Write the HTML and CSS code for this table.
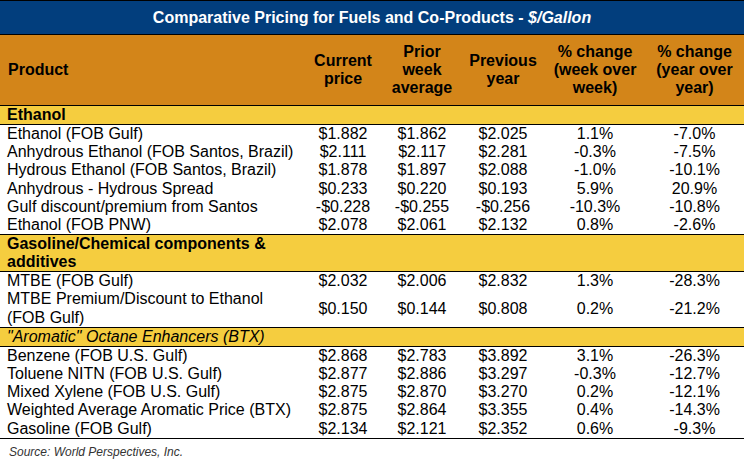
FILE: index.html
```html
<!DOCTYPE html>
<html>
<head>
<meta charset="utf-8">
<link rel="stylesheet" href="styles.css">
</head>
<body>
<div class="sheet">
<table class="grid">
<colgroup>
<col class="c-prod"><col class="c-cur"><col class="c-prior"><col class="c-prev"><col class="c-wk"><col class="c-yr">
</colgroup>
<thead>
<tr class="title-row"><th colspan="6">Comparative Pricing for Fuels and Co-Products - <em>$/Gallon</em></th></tr>
<tr class="head-row">
<th class="left">Product</th>
<th>Current<br>price</th>
<th>Prior<br>week<br>average</th>
<th>Previous<br>year</th>
<th>% change<br>(week over<br>week)</th>
<th>% change<br>(year over<br>year)</th>
</tr>
</thead>
<tbody>
<tr class="sect"><td class="name">Ethanol</td><td></td><td></td><td></td><td></td><td></td></tr>
<tr><td class="name">Ethanol (FOB Gulf)</td><td>$1.882</td><td>$1.862</td><td>$2.025</td><td>1.1%</td><td>-7.0%</td></tr>
<tr><td class="name">Anhydrous Ethanol (FOB Santos, Brazil)</td><td>$2.111</td><td>$2.117</td><td>$2.281</td><td>-0.3%</td><td>-7.5%</td></tr>
<tr><td class="name">Hydrous Ethanol (FOB Santos, Brazil)</td><td>$1.878</td><td>$1.897</td><td>$2.088</td><td>-1.0%</td><td>-10.1%</td></tr>
<tr><td class="name">Anhydrous - Hydrous Spread</td><td>$0.233</td><td>$0.220</td><td>$0.193</td><td>5.9%</td><td>20.9%</td></tr>
<tr><td class="name">Gulf discount/premium from Santos</td><td>-$0.228</td><td>-$0.255</td><td>-$0.256</td><td>-10.3%</td><td>-10.8%</td></tr>
<tr class="last"><td class="name">Ethanol (FOB PNW)</td><td>$2.078</td><td>$2.061</td><td>$2.132</td><td>0.8%</td><td>-2.6%</td></tr>
<tr class="sect tall"><td class="name">Gasoline/Chemical components &amp; additives</td><td></td><td></td><td></td><td></td><td></td></tr>
<tr><td class="name">MTBE (FOB Gulf)</td><td>$2.032</td><td>$2.006</td><td>$2.832</td><td>1.3%</td><td>-28.3%</td></tr>
<tr class="last"><td class="name">MTBE Premium/Discount to Ethanol (FOB Gulf)</td><td>$0.150</td><td>$0.144</td><td>$0.808</td><td>0.2%</td><td>-21.2%</td></tr>
<tr class="sect ital"><td class="name">"Aromatic" Octane Enhancers (BTX)</td><td></td><td></td><td></td><td></td><td></td></tr>
<tr><td class="name">Benzene (FOB U.S. Gulf)</td><td>$2.868</td><td>$2.783</td><td>$3.892</td><td>3.1%</td><td>-26.3%</td></tr>
<tr><td class="name">Toluene NITN (FOB U.S. Gulf)</td><td>$2.877</td><td>$2.886</td><td>$3.297</td><td>-0.3%</td><td>-12.7%</td></tr>
<tr><td class="name">Mixed Xylene (FOB U.S. Gulf)</td><td>$2.875</td><td>$2.870</td><td>$3.270</td><td>0.2%</td><td>-12.1%</td></tr>
<tr><td class="name">Weighted Average Aromatic Price (BTX)</td><td>$2.875</td><td>$2.864</td><td>$3.355</td><td>0.4%</td><td>-14.3%</td></tr>
<tr class="last end"><td class="name">Gasoline (FOB Gulf)</td><td>$2.134</td><td>$2.121</td><td>$2.352</td><td>0.6%</td><td>-9.3%</td></tr>
</tbody>
</table>
<p class="source">Source: World Perspectives, Inc.</p>
</div>
</body>
</html>
```
FILE: styles.css
```css
html, body {
  margin: 0;
  padding: 0;
  background: #ffffff;
}
body {
  font-family: "Liberation Sans", Arial, sans-serif;
  color: #000000;
}
.sheet {
  width: 744px;
}
.grid {
  width: 744px;
  table-layout: fixed;
  border-collapse: separate;
  border-spacing: 0;
}
.c-prod { width: 303px; }
.c-cur { width: 80px; }
.c-prior { width: 78px; }
.c-prev { width: 84px; }
.c-wk { width: 100px; }
.c-yr { width: 99px; }

.grid th, .grid td {
  padding: 0;
  font-size: 16px;
  line-height: 18.2px;
  text-align: center;
  vertical-align: middle;
  white-space: nowrap;
}
.grid td.name {
  text-align: left;
  padding-left: 7px;
  white-space: normal;
}
.title-row th {
  background: #023e7d;
  color: #ffffff;
  border-top: 1px solid #000;
  border-bottom: 1px solid #000;
  line-height: 33px;
  font-size: 16px;
  font-weight: bold;
}
.title-row em {
  font-style: italic;
}
.head-row th {
  background: #d38519;
  border-bottom: 1px solid #000;
  padding: 8px 0;
  font-size: 16px;
  font-weight: bold;
  line-height: 18px;
}
.head-row th.left {
  text-align: left;
  padding-left: 8px;
}
.sect td {
  background: #f5cd3f;
  border-bottom: 1px solid #000;
  line-height: 18px;
}
.sect td.name {
  font-weight: bold;
}
.sect.tall td.name {
  line-height: 18px;
}
.sect.ital td.name {
  font-weight: normal;
  font-style: italic;
}
.last td {
  border-bottom: 1px solid #000;
}
.source {
  margin: 6px 0 0 9px;
  font-size: 12px;
  line-height: 14px;
  font-style: italic;
  color: #333333;
}
```
